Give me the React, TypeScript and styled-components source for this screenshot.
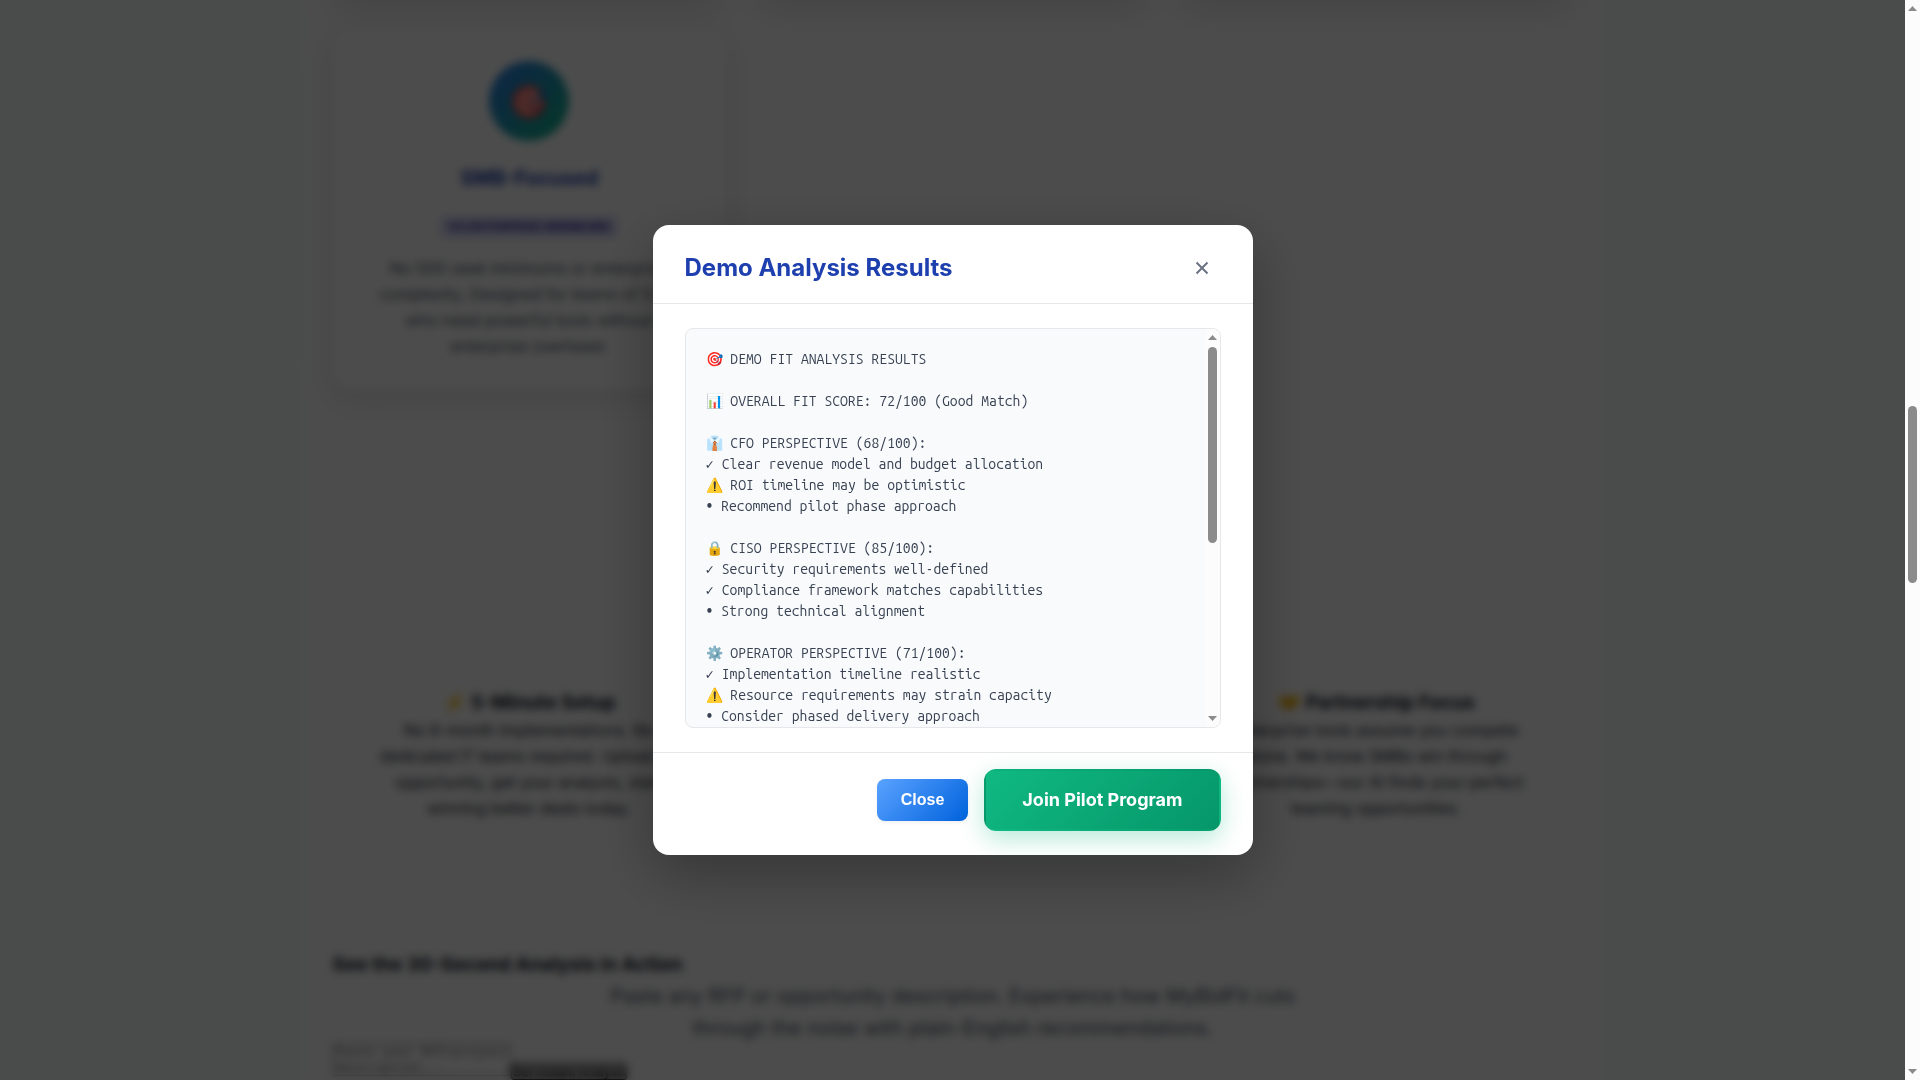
import React from 'react';
import styled, { createGlobalStyle } from 'styled-components';

const GlobalStyle = createGlobalStyle`
  *, *::before, *::after { box-sizing: border-box; }
  body {
    margin: 0;
    font-family: Inter, "Liberation Sans", sans-serif;
    font-size: 16px;
    color: #1f2937;
  }
  h2, h3, p, pre { margin: 0; }
`;

const Shell = styled.div`
  display: flex;
  height: 100vh;
  overflow: hidden;
`;

const Viewport = styled.div`
  position: relative;
  flex: 1;
  min-width: 0;
  overflow: hidden;
  background: #f6fdfa;
`;

const Page = styled.main`
  max-width: 1300px;
  min-height: 100%;
  margin: 0 auto;
  padding: 0 30px;
  background: #fefefe;
`;

const Columns = styled.div`
  display: grid;
  grid-template-columns: repeat(3, 1fr);
  gap: 30px;
`;

const Features = styled(Columns)`
  margin-top: -63px;
`;

const Card = styled.article`
  display: flex;
  flex-direction: column;
  align-items: center;
  min-height: 60px;
  padding: 32px 40px 30px;
  border-radius: 20px;
  background: #ffffff;
  box-shadow: 0 10px 30px rgba(0, 0, 0, 0.1);
  text-align: center;
`;

const CardIcon = styled.div`
  display: flex;
  align-items: center;
  justify-content: center;
  width: 80px;
  height: 80px;
  border-radius: 50%;
  background: linear-gradient(135deg, #2f7cf0, #10b981);
  font-size: 32px;
`;

const CardTitle = styled.h3`
  margin-top: 21px;
  font-size: 20px;
  line-height: 32px;
  color: #1e40af;
`;

const Badge = styled.span`
  margin: 22px 0 17px;
  padding: 0 8px;
  border-radius: 4px;
  background: #dbdcfb;
  font-size: 12px;
  font-weight: 700;
  line-height: 22px;
  color: #3730a3;
`;

const CardText = styled.p`
  max-width: 312px;
  line-height: 26px;
  color: #4b5563;
`;

const Reasons = styled(Columns)`
  margin-top: 300px;
`;

const Reason = styled.section<{ $column: number }>`
  grid-column: ${(p) => p.$column};
  padding: 0 40px;
  text-align: center;
`;

const SectionTitle = styled.h3`
  font-size: 19px;
  line-height: 28px;
  color: #111827;
`;

const ReasonText = styled.p`
  line-height: 26px;
`;

const Demo = styled.section`
  margin-top: 130px;
`;

const DemoIntro = styled.p`
  max-width: 700px;
  margin: 1px auto 0;
  font-size: 20px;
  line-height: 32px;
  text-align: center;
  color: #4b5563;
`;

const DemoInput = styled.textarea`
  width: 178px;
  height: 32px;
  padding: 0 2px;
  border: 1px solid #767676;
  resize: none;
  font-family: "Liberation Mono", monospace;
  font-size: 13px;
  line-height: 15px;
  overflow: hidden;
`;

const DemoButton = styled.button`
  padding: 0;
  border: 1px solid #000000;
  border-radius: 3px;
  background: #bdbdbd;
  font-family: "Liberation Sans", Arial, sans-serif;
  font-size: 13px;
  line-height: 15px;
  color: #000000;
`;

const Overlay = styled.div`
  position: absolute;
  inset: 0;
  display: flex;
  align-items: center;
  justify-content: center;
  background: rgba(0, 0, 0, 0.7);
  backdrop-filter: blur(4px);
`;

const Modal = styled.div`
  display: flex;
  flex-direction: column;
  width: 600px;
  max-width: 90%;
  border-radius: 16px;
  background: #ffffff;
  box-shadow: 0 20px 60px rgba(0, 0, 0, 0.3);
`;

const ModalHeader = styled.header`
  display: flex;
  align-items: center;
  justify-content: space-between;
  padding: 24px 32px 16px;
  border-bottom: 1px solid #e5e7eb;
`;

const ModalTitle = styled.h2`
  font-size: 24px;
  font-weight: 700;
  line-height: 38px;
  color: #1e40af;
`;

const DismissButton = styled.button`
  display: flex;
  align-items: center;
  justify-content: center;
  width: 38px;
  height: 38px;
  padding: 0;
  border: 0;
  background: none;
  color: #6b7280;
`;

const Cross = styled.svg`
  width: 14px;
  height: 14px;
  fill: none;
  stroke: currentColor;
  stroke-width: 2;
`;

const ModalBody = styled.div`
  padding: 24px 32px;
`;

const ResultBox = styled.div`
  display: flex;
  height: 400px;
  border: 1px solid #e5e7eb;
  border-radius: 8px;
  background: #f8fafc;
  overflow: hidden;
`;

const ResultText = styled.pre`
  flex: 1;
  padding: 20px 20px 0;
  font-family: "Ubuntu Mono", monospace;
  font-size: 14px;
  line-height: 21px;
  white-space: pre-wrap;
  color: #374151;
`;

const ModalFooter = styled.footer`
  display: flex;
  align-items: center;
  justify-content: flex-end;
  gap: 16px;
  padding: 16px 32px 24px;
  border-top: 1px solid #e5e7eb;
`;

const CloseButton = styled.button`
  padding: 12px 24px;
  border: 0;
  border-radius: 8px;
  background: linear-gradient(135deg, #5aa2ff, #0062dd);
  box-shadow: 0 2px 4px rgba(0, 0, 0, 0.06);
  font-family: "Liberation Sans", Arial, sans-serif;
  font-size: 16px;
  font-weight: 600;
  line-height: 18px;
  color: #ffffff;
`;

const JoinLink = styled.a`
  padding: 15px 36px;
  border: 2px solid transparent;
  border-radius: 12px;
  background: linear-gradient(135deg, #10b981, #059669);
  box-shadow: 0 8px 25px rgba(16, 185, 129, 0.3);
  font-size: 18px;
  font-weight: 700;
  line-height: 28px;
  text-decoration: none;
  color: #ffffff;
`;

const Bar = styled.div`
  display: flex;
  flex: none;
  flex-direction: column;
  align-items: center;
  width: 15px;
  padding: 6px 0;
  background: #fcfcfc;
`;

const Arrow = styled.svg`
  flex: none;
  width: 9px;
  height: 5px;
  fill: #8b8b8b;
`;

const Track = styled.div`
  display: flex;
  flex: 1;
  flex-direction: column;
  width: 9px;
  margin: 7px 0;
`;

const Space = styled.div<{ $share: number }>`
  flex: ${(p) => p.$share} 0 0;
`;

const Thumb = styled(Space)`
  border-radius: 5px;
  background: #8b8b8b;
`;

function Scrollbar({ before, size, after }: { before: number; size: number; after: number }) {
  return (
    <Bar aria-hidden="true">
      <Arrow viewBox="0 0 9 5"><path d="M4.5 0 9 5H0z" /></Arrow>
      <Track>
        <Space $share={before} />
        <Thumb $share={size} />
        <Space $share={after} />
      </Track>
      <Arrow viewBox="0 0 9 5"><path d="M0 0h9L4.5 5z" /></Arrow>
    </Bar>
  );
}

const results = `🎯 DEMO FIT ANALYSIS RESULTS

📊 OVERALL FIT SCORE: 72/100 (Good Match)

👔 CFO PERSPECTIVE (68/100):
✓ Clear revenue model and budget allocation
⚠️ ROI timeline may be optimistic
• Recommend pilot phase approach

🔒 CISO PERSPECTIVE (85/100):
✓ Security requirements well-defined
✓ Compliance framework matches capabilities
• Strong technical alignment

⚙️ OPERATOR PERSPECTIVE (71/100):
✓ Implementation timeline realistic
⚠️ Resource requirements may strain capacity
• Consider phased delivery approach`;

export default function App() {
  return (
    <>
      <GlobalStyle />
      <Shell>
        <Viewport>
          <Page>
            <Features>
              <Card />
              <Card />
              <Card />
              <Card>
                <CardIcon>🎯</CardIcon>
                <CardTitle>SMB-Focused</CardTitle>
                <Badge>VS ENTERPRISE MINIMUMS</Badge>
                <CardText>
                  No 500-seat minimums or enterprise complexity. Designed for teams of 5-50 who need
                  powerful tools without enterprise overhead.
                </CardText>
              </Card>
            </Features>
            <Reasons>
              <Reason $column={1}>
                <SectionTitle>⚡ 5-Minute Setup</SectionTitle>
                <ReasonText>
                  No 6-month implementations. No dedicated IT teams required. Upload an opportunity,
                  get your analysis, start winning better deals today.
                </ReasonText>
              </Reason>
              <Reason $column={3}>
                <SectionTitle>🤝 Partnership Focus</SectionTitle>
                <ReasonText>
                  Enterprise tools assume you compete alone. We know SMBs win through
                  partnerships—our AI finds your perfect teaming opportunities.
                </ReasonText>
              </Reason>
            </Reasons>
            <Demo>
              <SectionTitle>See the 30-Second Analysis in Action</SectionTitle>
              <DemoIntro>
                Paste any RFP or opportunity description. Experience how MyBidFit cuts through the
                noise with plain-English recommendations.
              </DemoIntro>
              <DemoInput aria-label="Opportunity description" placeholder="Paste your RFP/project description..." />
              <DemoButton type="button">Get Instant Analysis</DemoButton>
            </Demo>
          </Page>
          <Overlay>
            <Modal role="dialog" aria-modal="true" aria-labelledby="modal-title">
              <ModalHeader>
                <ModalTitle id="modal-title">Demo Analysis Results</ModalTitle>
                <DismissButton type="button" aria-label="Dismiss">
                  <Cross viewBox="0 0 14 14"><path d="M1.5 1.5l11 11M12.5 1.5l-11 11" /></Cross>
                </DismissButton>
              </ModalHeader>
              <ModalBody>
                <ResultBox>
                  <ResultText>{results}</ResultText>
                  <Scrollbar before={0} size={197} after={167} />
                </ResultBox>
              </ModalBody>
              <ModalFooter>
                <CloseButton type="button">Close</CloseButton>
                <JoinLink href="#pilot">Join Pilot Program</JoinLink>
              </ModalFooter>
            </Modal>
          </Overlay>
        </Viewport>
        <Scrollbar before={388} size={177} after={479} />
      </Shell>
    </>
  );
}
